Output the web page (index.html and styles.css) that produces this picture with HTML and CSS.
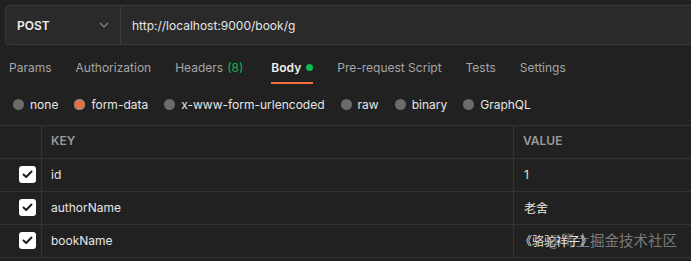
FILE: index.html
```html
<!DOCTYPE html>
<html lang="zh">
<head>
<meta charset="utf-8">
<title>Postman</title>
<link rel="stylesheet" href="styles.css">
</head>
<body>
<div class="request-bar">
  <div class="method">
    <span class="method-name">POST</span>
    <svg class="chevron" width="10" height="6" viewBox="0 0 10 6"><path d="M1 1 L5 5 L9 1" fill="none" stroke="#8a8a8a" stroke-width="1.2"/></svg>
  </div>
  <div class="url">http://localhost:9000/book/g</div>
</div>

<div class="tabs">
  <div class="tab">Params</div>
  <div class="tab">Authorization</div>
  <div class="tab">Headers <span class="count">(8)</span></div>
  <div class="tab active">Body <span class="dot"></span></div>
  <div class="tab">Pre-request Script</div>
  <div class="tab">Tests</div>
  <div class="tab">Settings</div>
</div>

<div class="body-types">
  <div class="radio"><span class="circle"></span>none</div>
  <div class="radio"><span class="circle on"></span>form-data</div>
  <div class="radio"><span class="circle"></span>x-www-form-urlencoded</div>
  <div class="radio"><span class="circle"></span>raw</div>
  <div class="radio"><span class="circle"></span>binary</div>
  <div class="radio"><span class="circle"></span>GraphQL</div>
</div>

<div class="table">
  <div class="cell check-col head"></div>
  <div class="cell head">KEY</div>
  <div class="cell head">VALUE</div>

  <div class="cell check-col"><span class="checkbox"><svg width="11" height="9" viewBox="0 0 11 9"><path d="M1.5 4.5 L4.2 7 L9.5 1.5" fill="none" stroke="#1e1e1e" stroke-width="2" stroke-linecap="round" stroke-linejoin="round"/></svg></span></div>
  <div class="cell">id</div>
  <div class="cell value num">1</div>

  <div class="cell check-col"><span class="checkbox"><svg width="11" height="9" viewBox="0 0 11 9"><path d="M1.5 4.5 L4.2 7 L9.5 1.5" fill="none" stroke="#1e1e1e" stroke-width="2" stroke-linecap="round" stroke-linejoin="round"/></svg></span></div>
  <div class="cell">authorName</div>
  <div class="cell value">老舍</div>

  <div class="cell check-col"><span class="checkbox"><svg width="11" height="9" viewBox="0 0 11 9"><path d="M1.5 4.5 L4.2 7 L9.5 1.5" fill="none" stroke="#1e1e1e" stroke-width="2" stroke-linecap="round" stroke-linejoin="round"/></svg></span></div>
  <div class="cell">bookName</div>
  <div class="cell value book">《骆驼祥子》</div>
</div>

<div class="watermark">@稀土掘金技术社区</div>
</body>
</html>
```
FILE: styles.css
```css
* { box-sizing: border-box; }
html, body {
  margin: 0;
  padding: 0;
  background: #212121;
  width: 691px;
  height: 261px;
  overflow: hidden;
}
body {
  font-family: Inter, "Noto Sans CJK SC", sans-serif;
  font-size: 12px;
  color: #e6e6e6;
  position: relative;
}

.request-bar {
  display: flex;
  height: 40px;
  margin: 5px 0 0 5px;
  background: #2a2a2a;
  border: 1px solid #3a3a3a;
  border-right: none;
  border-radius: 4px 0 0 4px;
}
.method {
  width: 115px;
  display: flex;
  align-items: center;
  justify-content: space-between;
  padding: 0 11px 0 11px;
  border-right: 1px solid #3a3a3a;
}
.method-name {
  font-weight: 600;
  font-size: 12px;
  color: #f0f0f0;
}
.url {
  display: flex;
  align-items: center;
  padding-left: 11px;
  font-size: 12px;
  color: #e6e6e6;
}

.tabs {
  display: flex;
  height: 40px;
  padding-left: 9px;
  gap: 24px;
}
.tab {
  display: flex;
  align-items: center;
  color: #a6a6a6;
  position: relative;
  padding-top: 4px;
}
.count { color: #0cbb52; margin-left: 4px; }
.tab.active {
  color: #f2f2f2;
  font-weight: 600;
  margin-left: 4px;
}
.tab.active::after {
  content: "";
  position: absolute;
  left: 0;
  right: 0;
  bottom: 1px;
  height: 2px;
  background: #f26b3a;
}
.dot {
  display: inline-block;
  width: 7px;
  height: 7px;
  border-radius: 50%;
  background: #0cbb52;
  margin-left: 5px;
}

.body-types {
  display: flex;
  height: 40px;
  align-items: center;
  padding: 0 0 2px 13px;
  gap: 15px;
}
.radio {
  display: flex;
  align-items: center;
  color: #e6e6e6;
}
.radio + .radio { margin-left: 1px; }
.circle {
  width: 11px;
  height: 11px;
  border-radius: 50%;
  background: #6b6b6b;
  margin-right: 6px;
}
.circle.on {
  background: #f26b3a;
  box-shadow: inset 0 0 0 1.5px #8a8a8a;
}

.table {
  display: grid;
  grid-template-columns: 41px 472px 1fr;
  border-top: 1px solid #333333;
}
.cell {
  height: 33px;
  display: flex;
  align-items: center;
  padding-left: 9px;
  padding-bottom: 1px;
  border-bottom: 1px solid #333333;
  border-left: 1px solid #333333;
}
.cell.check-col {
  border-left: none;
  padding-left: 19px;
}
.cell.head {
  color: #9a9a9a;
  font-weight: 600;
  font-size: 12px;
  padding-bottom: 3px;
}
.cell.value { padding-left: 10px; }
.cell.value.book { padding-left: 6px; }
.num { color: #e8e8b0; }
.checkbox {
  width: 17px;
  height: 17px;
  border-radius: 3px;
  background: #ffffff;
  display: flex;
  align-items: center;
  justify-content: center;
}

.watermark {
  position: absolute;
  right: 14px;
  bottom: 11px;
  font-size: 14.5px;
  color: rgba(200, 200, 200, 0.55);
  font-family: "Noto Sans CJK SC", sans-serif;
}
```
